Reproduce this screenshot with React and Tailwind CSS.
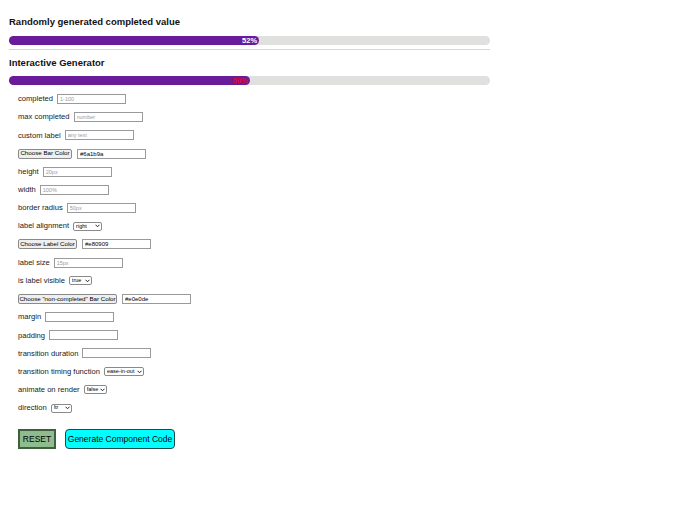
import React, { useState } from 'react'

const font = { fontFamily: '"Liberation Sans", Arial, sans-serif' }

function Bar({ completed, labelColor }) {
  return (
    <div className="h-[9px] w-full rounded-full bg-[#e0e0de]">
      <div
        className="flex h-full items-center justify-end rounded-full bg-[#6a1b9a] pr-[2px]"
        style={{ width: `${completed}%` }}
      >
        <span className={`text-[7.5px] font-bold leading-none ${labelColor}`}>{completed}%</span>
      </div>
    </div>
  )
}

function TextInput({ placeholder, value, width = 'w-[69px]' }) {
  return (
    <input
      className={`block h-[10px] ${width} border border-[#9a9a9a] bg-white px-[2px] text-[6px] text-black placeholder:text-[5.5px] placeholder:text-[#9a9a9a] outline-none`}
      placeholder={placeholder}
      defaultValue={value}
    />
  )
}

function Select({ value, options, width }) {
  return (
    <div className={`relative h-[9px] ${width} leading-none`}>
      <select
        className="block h-[9px] w-full appearance-none rounded-[2px] border border-[#8a8a8a] bg-white py-0 pl-[2px] text-[5.5px] leading-none text-black outline-none"
        defaultValue={value}
      >
        {options.map(o => <option key={o}>{o}</option>)}
      </select>
      <svg className="pointer-events-none absolute right-[2px] top-[2.5px] h-[4px] w-[5px]" viewBox="0 0 10 8">
        <path d="M1 1.5 L5 5.5 L9 1.5" fill="none" stroke="#222" strokeWidth="2" />
      </svg>
    </div>
  )
}

function ColorButton({ children, width }) {
  return (
    <button className={`flex h-[10px] ${width} items-center justify-center whitespace-nowrap rounded-[2px] border border-[#8a8a8a] bg-[#efefef] p-0 text-[6.2px] leading-none text-black`}>
      {children}
    </button>
  )
}

function Row({ label, gap = 'gap-[4px]', children }) {
  return (
    <div className={`flex h-[18.18px] items-center ${gap}`}>
      {label && <span className="text-[7.6px] leading-none text-[#1a1a1a]">{label}</span>}
      {children}
    </div>
  )
}

export default function App() {
  const [random] = useState(52)

  return (
    <div className="min-h-screen bg-white px-[9px] pt-[16px]" style={font}>
      <h3 className="text-[9.5px] font-bold leading-[12px] text-[#111]">Randomly generated completed value</h3>
      <div className="mt-[8px] w-[481px]">
        <Bar completed={random} labelColor="text-white" />
      </div>
      <hr className="mt-[4px] w-[481px] border-t border-[#d6d6d6]" />

      <h3 className="mt-[7px] text-[9.5px] font-bold leading-[12px] text-[#111]">Interactive Generator</h3>
      <div className="mt-[7px] w-[481px]">
        <Bar completed={50} labelColor="text-[#e80909]" />
      </div>

      <div className="mt-[5px] pl-[9px]">
        <Row label="completed"><TextInput placeholder="1-100" /></Row>
        <Row label="max completed"><TextInput placeholder="number" /></Row>
        <Row label="custom label"><TextInput placeholder="any text" /></Row>
        <Row gap="gap-[5px]">
          <ColorButton width="w-[54px]">Choose Bar Color</ColorButton>
          <TextInput value="#6a1b9a" />
        </Row>
        <Row label="height"><TextInput placeholder="20px" /></Row>
        <Row label="width"><TextInput placeholder="100%" /></Row>
        <Row label="border radius"><TextInput placeholder="50px" /></Row>
        <Row label="label alignment">
          <Select value="right" options={['left', 'center', 'right', 'outside']} width="w-[29px]" />
        </Row>
        <Row gap="gap-[5px]">
          <ColorButton width="w-[59px]">Choose Label Color</ColorButton>
          <TextInput value="#e80909" />
        </Row>
        <Row label="label size"><TextInput placeholder="15px" /></Row>
        <Row label="is label visible">
          <Select value="true" options={['true', 'false']} width="w-[23px]" />
        </Row>
        <Row gap="gap-[5px]">
          <ColorButton width="w-[99px]">Choose "non-completed" Bar Color</ColorButton>
          <TextInput value="#e0e0de" />
        </Row>
        <Row label="margin"><TextInput /></Row>
        <Row label="padding"><TextInput /></Row>
        <Row label="transition duration"><TextInput /></Row>
        <Row label="transition timing function">
          <Select value="ease-in-out" options={['ease', 'linear', 'ease-in', 'ease-out', 'ease-in-out']} width="w-[40px]" />
        </Row>
        <Row label="animate on render">
          <Select value="false" options={['true', 'false']} width="w-[23px]" />
        </Row>
        <Row label="direction">
          <Select value="ltr" options={['ltr', 'rtl']} width="w-[21px]" />
        </Row>

        <div className="mt-[12px] flex items-center gap-[9px]">
          <button className="h-[20px] w-[38px] border-2 border-[#3f5f3f] bg-[#8fbc8f] text-[8.5px] text-black">
            RESET
          </button>
          <button className="h-[20px] w-[110px] rounded-[4px] border border-[#1a4a4a] bg-[#00ffff] text-[8.5px] text-black">
            Generate Component Code
          </button>
        </div>
      </div>
    </div>
  )
}
